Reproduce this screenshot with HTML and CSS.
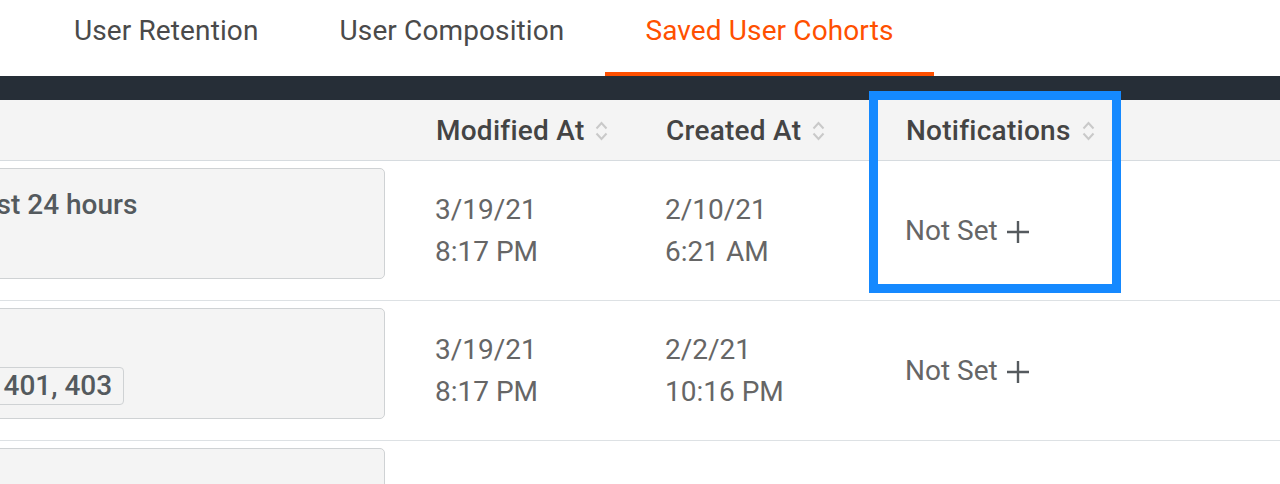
FILE: index.html
```html
<!DOCTYPE html>
<html lang="en">
<head>
<meta charset="utf-8">
<title>Saved User Cohorts</title>
<link rel="stylesheet" href="styles.css">
</head>
<body>
<nav class="tabs">
  <a class="tab">User Retention</a>
  <a class="tab">User Composition</a>
  <a class="tab active">Saved User Cohorts</a>
</nav>
<div class="darkbar"></div>
<div class="viewport">
  <div class="table">
    <div class="row head">
      <div class="cell first"></div>
      <div class="cell th">Modified At <svg class="sort" width="13" height="22" viewBox="0 0 13 22"><path d="M1.5 8.5 L6.5 3 L11.5 8.5 M1.5 13.5 L6.5 19 L11.5 13.5" fill="none" stroke="#c9c9c9" stroke-width="2"/></svg></div>
      <div class="cell th">Created At <svg class="sort" width="13" height="22" viewBox="0 0 13 22"><path d="M1.5 8.5 L6.5 3 L11.5 8.5 M1.5 13.5 L6.5 19 L11.5 13.5" fill="none" stroke="#c9c9c9" stroke-width="2"/></svg></div>
      <div class="cell th">Notifications <svg class="sort" width="13" height="22" viewBox="0 0 13 22"><path d="M1.5 8.5 L6.5 3 L11.5 8.5 M1.5 13.5 L6.5 19 L11.5 13.5" fill="none" stroke="#c9c9c9" stroke-width="2"/></svg></div>
    </div>
    <div class="row">
      <div class="cell first">
        <div class="card"><div class="card-title">Users active in the Last 24 hours</div></div>
      </div>
      <div class="cell date">3/19/21<br>8:17 PM</div>
      <div class="cell date">2/10/21<br>6:21 AM</div>
      <div class="cell notif">Not Set <svg class="plus" width="24" height="24" viewBox="0 0 24 24"><path d="M12 1 V23 M1 12 H23" stroke="#555a5e" stroke-width="2.4" fill="none"/></svg></div>
    </div>
    <div class="row">
      <div class="cell first">
        <div class="card">
          <div class="card-title">Errors</div>
          <div class="filter"><span class="label">Status code in</span><span class="tag">400, 401, 403</span></div>
        </div>
      </div>
      <div class="cell date">3/19/21<br>8:17 PM</div>
      <div class="cell date">2/2/21<br>10:16 PM</div>
      <div class="cell notif">Not Set <svg class="plus" width="24" height="24" viewBox="0 0 24 24"><path d="M12 1 V23 M1 12 H23" stroke="#555a5e" stroke-width="2.4" fill="none"/></svg></div>
    </div>
    <div class="row">
      <div class="cell first">
        <div class="card"><div class="card-title">New users</div></div>
      </div>
      <div class="cell date"></div>
      <div class="cell date"></div>
      <div class="cell notif"></div>
    </div>
  </div>
  <div class="highlight"></div>
</div>
</body>
</html>
```
FILE: styles.css
```css
* { box-sizing: border-box; }
html, body { margin: 0; padding: 0; background: #fff; }
body {
  font-family: Roboto, "Liberation Sans", Arial, sans-serif;
  font-size: 28px;
  color: #666;
  overflow: hidden;
  height: 484px;
}
.tabs {
  display: flex;
  height: 76px;
  padding-left: 33.5px;
}
.tab {
  display: block;
  padding: 14px 40.5px 0;
  height: 76px;
  color: #4a4a4a;
  letter-spacing: 0.12px;
  border-bottom: 4px solid transparent;
  white-space: nowrap;
}
.tab.active {
  color: #ff5000;
  border-bottom-color: #ff5000;
}
.darkbar {
  height: 24px;
  background: #262e37;
}
.viewport {
  position: relative;
}
.table {
  margin-left: -300px;
  width: calc(100% + 300px);
}
.row {
  display: grid;
  grid-template-columns: 720px 230px 240px 1fr;
  align-items: center;
  height: 140px;
  border-bottom: 1px solid #dde1e4;
}
.row.head {
  height: 61px;
  background: #f4f4f4;
  border-bottom: 1px solid #d6dbdf;
}
.cell {
  padding-left: 15px;
  white-space: nowrap;
}
.cell.first {
  padding-left: 12px;
  align-self: start;
}
.th {
  display: flex;
  align-items: center;
  gap: 11px;
  font-weight: 500;
  letter-spacing: 0.25px;
  color: #444;
  padding-left: 16px;
}
.sort { display: block; margin-top: 1px; }
.date {
  line-height: 42px;
  color: #666;
}
.notif {
  display: flex;
  align-items: center;
  gap: 8px;
  color: #666;
  padding-left: 15px;
}
.plus { display: block; margin-top: 2px; }
.card {
  margin-top: 7px;
  width: 673px;
  height: 111px;
  background: #f4f4f4;
  border: 1px solid #cfd2d4;
  border-radius: 5px;
  padding: 19px 16px 0;
  color: #545a5e;
}
.card-title {
  font-weight: 500;
}
.filter {
  display: flex;
  align-items: center;
  gap: 24px;
  margin-top: 6px;
}
.label { color: #666; }
.tag {
  display: block;
  border: 1px solid #cfd2d4;
  border-radius: 4px;
  padding: 1px 11px;
  line-height: 34px;
  font-weight: 500;
  color: #545a5e;
}
.highlight {
  position: absolute;
  left: 869px;
  top: -9px;
  width: 252px;
  height: 202px;
  border: 9px solid #1589ff;
}
```
